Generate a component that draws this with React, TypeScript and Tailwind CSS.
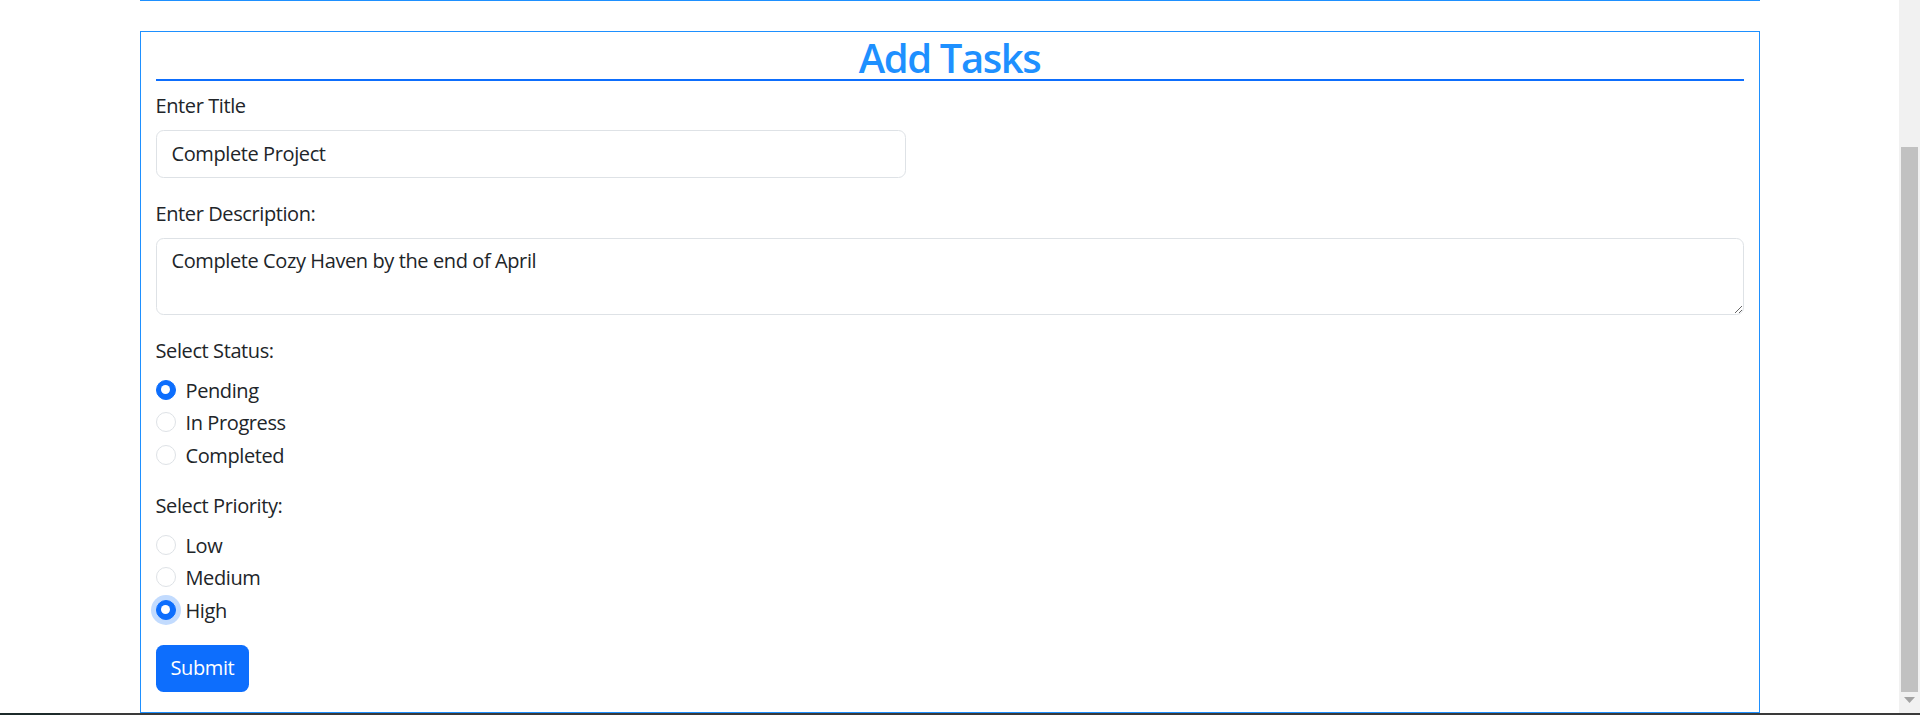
import React from "react";

function Radio({ label, checked, focused }: { label: string; checked?: boolean; focused?: boolean }) {
  return (
    <div className="flex h-[30px] mb-[2.5px] items-start">
      <span
        className={
          "mt-[5px] w-[20px] h-[20px] rounded-full flex items-center justify-center shrink-0 " +
          (checked ? "bg-[#0d6efd] border border-[#0d6efd] " : "bg-white border border-[#dee2e6] ") +
          (focused ? "shadow-[0_0_0_5px_rgba(13,110,253,0.25)]" : "")
        }
      >
        {checked && <span className="w-[9px] h-[9px] rounded-full bg-white" />}
      </span>
      <span className="ml-[10px] leading-[30px] pt-[1px] text-[20px] text-[#212529] tracking-[-0.4px]">{label}</span>
    </div>
  );
}

function Label({ children }: { children: React.ReactNode }) {
  return (
    <div className="h-[30px] leading-[30px] pt-[1px] mb-[10px] text-[20px] text-[#212529] tracking-[-0.4px]">
      {children}
    </div>
  );
}

export default function App() {
  return (
    <div
      className="w-[1920px] h-[715px] flex flex-col overflow-hidden bg-white"
      style={{ fontFamily: '"Open Sans", "Noto Sans", sans-serif' }}
    >
      <div className="flex h-[713px] shrink-0 overflow-hidden">
        <main className="flex-1 flex flex-col">
          <div className="mx-auto w-[1620px] h-px shrink-0 bg-[#1e90ff]" />
          <div className="mx-auto mt-[30px] shrink-0 w-[1620px] border border-[#1e90ff] px-[15px] pb-[20px]">
            <h2 className="h-[49px] leading-[49px] pt-[1px] border-b-2 border-[#0d6efd] text-center text-[40px] font-semibold text-[#1e90ff] tracking-[-1.4px] mb-[9px]">
              Add Tasks
            </h2>
            <div className="mb-[20px]">
              <Label>Enter Title</Label>
              <input
                readOnly
                value="Complete Project"
                className="block w-[750px] h-[47.5px] border border-[#dee2e6] rounded-[7.5px] px-[15px] text-[20px] text-[#212529] tracking-[-0.4px] outline-none"
              />
            </div>
            <div className="mb-[20px]">
              <Label>Enter Description:</Label>
              <textarea
                readOnly
                defaultValue="Complete Cozy Haven by the end of April"
                className="block w-full h-[77px] border border-[#dee2e6] rounded-[7.5px] px-[15px] py-[7.5px] leading-[30px] text-[20px] text-[#212529] tracking-[-0.4px] outline-none resize-y"
              />
            </div>
            <div className="mb-[20px]">
              <Label>Select Status:</Label>
              <Radio label="Pending" checked />
              <Radio label="In Progress" />
              <Radio label="Completed" />
            </div>
            <div className="mb-[20px]">
              <Label>Select Priority:</Label>
              <Radio label="Low" />
              <Radio label="Medium" />
              <Radio label="High" checked focused />
            </div>
            <button className="h-[47.5px] px-[15px] rounded-[7.5px] bg-[#0d6efd] text-white text-[20px] leading-[30px] tracking-[-0.4px]">
              Submit
            </button>
          </div>
        </main>
        <div className="w-[21px] shrink-0 bg-[#f1f1f1] flex flex-col items-center">
          <div className="mt-[147px] w-[17px] h-[545px] shrink-0 bg-[#c1c1c1]" />
          <svg className="mt-[5px] shrink-0" width="11" height="7" viewBox="0 0 11 7">
            <path d="M0 0 H11 L5.5 6 Z" fill="#a3a3a3" />
          </svg>
        </div>
      </div>
      <div className="h-[2px] shrink-0 flex">
        <div className="w-[60px] bg-[#1c2a2a]" />
        <div className="flex-1 bg-[#3a3a3a]" />
      </div>
    </div>
  );
}
